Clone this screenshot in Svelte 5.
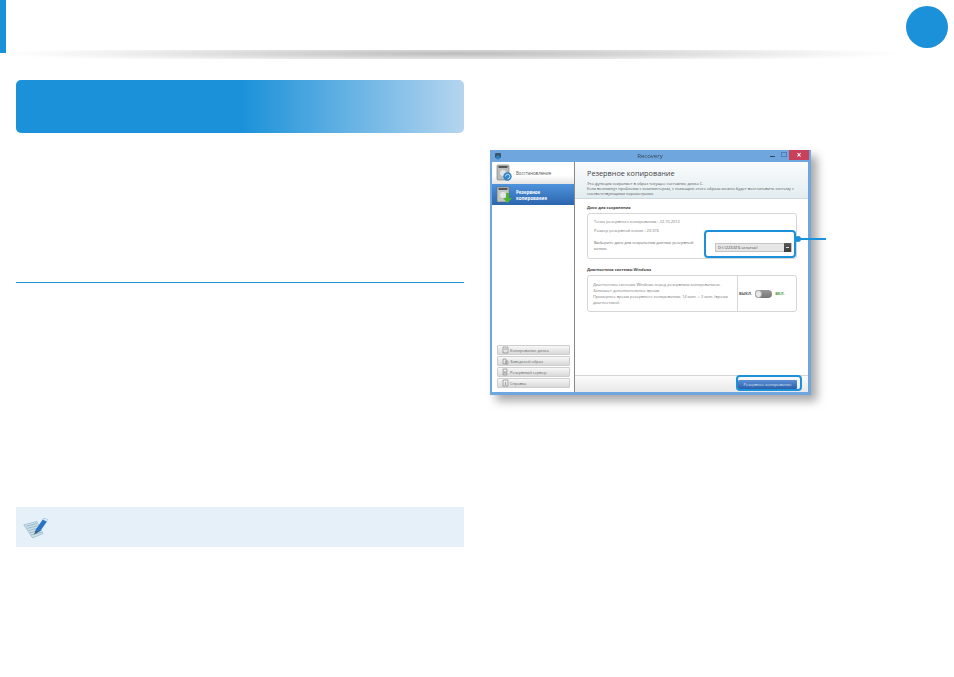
<script>
  const tools = [
    { label: "Копирование диска", glyph: "M1 1h5v6H1z M2 3h3" },
    { label: "Заводской образ", glyph: "M1 2h3v5H1z M4 4h2v3H4z" },
    { label: "Резервный сервер", glyph: "M1 1h4v3H1z M1 5h4v2H1z" },
    { label: "Справка", glyph: "M1 1h5v6H1z M3.500 3v3" }
  ];
</script>

<div class="page">
  <header class="top">
    <div class="chapter-dot"></div>
    <div class="shade"></div>
  </header>

  <div class="columns">
    <section class="left">
      <div class="heading"></div>
      <div class="rule"></div>
      <div class="note">
        <svg width="26" height="25" viewBox="0 0 30 28">
          <path d="M1 11 L16 7 L23 21 L11 26 Z" fill="#cde0e8" stroke="#8fb4c6" stroke-width="0.8" />
          <path d="M4 12.5 L16 9.5 M5 15 L17 12 M6.5 17.5 L18.5 14.5 M8 20 L20 17 M9.5 22.5 L21 19.5" stroke="#8aafc0" stroke-width="0.9" />
          <path d="M13 22 L15 16 L24 3 L29 5 L20 18 Z" fill="#2a74c4" />
          <path d="M24 3 L29 5 L28 7.5 L23 5 Z" fill="#dcecf7" />
          <path d="M13 22 L15 17 L17.5 19 Z" fill="#4a5a6a" />
        </svg>
      </div>
    </section>

    <section class="right">
      <div class="window">
        <div class="titlebar">
          <svg class="app-icon" width="8" height="8" viewBox="0 0 8 8">
            <rect x="1" y="1" width="6" height="5" rx="1" fill="#39566e" />
            <circle cx="4" cy="5.5" r="2" fill="#2c7fbf" />
          </svg>
          <span class="title">Recovery</span>
          <div class="controls">
            <span class="min"></span>
            <span class="max"></span>
            <span class="close">×</span>
          </div>
        </div>

        <div class="body">
          <aside class="side">
            <div class="item">
              <svg width="17" height="18" viewBox="0 0 17 18">
                <rect x="1" y="1" width="12" height="15" rx="1" fill="#b9bdbd" stroke="#6d7272" stroke-width="0.6" />
                <rect x="2.500" y="2" width="9" height="2" fill="#555" />
                <circle cx="7" cy="9" r="3" fill="#e2e4e4" />
                <circle cx="11.500" cy="12.500" r="4.200" fill="#2f83c9" />
                <path d="M9.500 12.500a2.200 2.200 0 1 1 2 2.200" fill="none" stroke="#cfe6f7" stroke-width="0.9" />
              </svg>
              <span>Восстановление</span>
            </div>
            <div class="item active">
              <svg width="17" height="18" viewBox="0 0 17 18">
                <rect x="1" y="1" width="12" height="15" rx="1" fill="#c3c7c4" stroke="#5d6a70" stroke-width="0.6" />
                <rect x="2.500" y="2" width="9" height="2" fill="#555" />
                <circle cx="7" cy="9" r="3" fill="#e6e8e6" />
                <path d="M10 7h3v5h3l-4.500 5L7 12h3z" fill="#4fb32f" />
              </svg>
              <span>Резервное<br />копирование</span>
            </div>
            <div class="tools">
              {#each tools as tool}
                <button class="tool">
                  <svg width="7" height="8" viewBox="0 0 7 8">
                    <path d={tool.glyph} fill="none" stroke="#8a8a8a" stroke-width="0.7" />
                  </svg>
                  {tool.label}
                </button>
              {/each}
            </div>
          </aside>

          <main class="content">
            <div class="intro">
              <h1>Резервное копирование</h1>
              <p>Эта функция сохраняет в образ текущее состояние диска С.</p>
              <p>Если возникнут проблемы с компьютером, с помощью этого образа можно будет восстановить систему с</p>
              <p>соответствующими параметрами.</p>
            </div>

            <div class="panels">
              <h2>Диск для сохранения</h2>
              <div class="box disk">
                <p>Точка резервного копирования : 22.10.2012</p>
                <p class="second">Размер резервной копии : 23.5ГБ</p>
                <div class="pick">
                  <p>Выберите диск для сохранения данных резервной копии.</p>
                  <div class="select">
                    <span>D:\ (223.6ГБ остаток)</span>
                    <i></i>
                  </div>
                </div>
              </div>

              <h2 class="diag">Диагностика системы Windows</h2>
              <div class="box check">
                <div class="check-text">
                  <p>Диагностика системы Windows перед резервным копированием.</p>
                  <p>Занимает дополнительное время.</p>
                  <p>Примерное время резервного копирования: 14 мин. + 2 мин. (время диагностики).</p>
                </div>
                <div class="switch">
                  <b>ВЫКЛ.</b>
                  <span class="track"><span class="knob"></span></span>
                  <b class="on">ВКЛ.</b>
                </div>
              </div>
            </div>

            <div class="footer">
              <button class="backup">Резервное копирование</button>
            </div>
          </main>
        </div>

        <div class="mark mark-select"></div>
        <div class="mark mark-button"></div>
      </div>
      <div class="callout"></div>
    </section>
  </div>
</div>

<style>
  :global(body) {
    margin: 0;
    background: #fff;
  }

  .page {
    width: 954px;
    height: 677px;
    background: #fff;
    overflow: hidden;
    font-family: "Open Sans", "Liberation Sans", sans-serif;
  }

  .top {
    position: relative;
    height: 53px;
    box-sizing: border-box;
    border-left: 6px solid #1a91d9;
    display: flex;
    justify-content: flex-end;
    align-items: center;
  }

  .chapter-dot {
    position: relative;
    z-index: 1;
    width: 42px;
    height: 42px;
    margin: 1px 6px 0 0;
    border-radius: 50%;
    background: #1a91d9;
  }

  .shade {
    position: absolute;
    left: -6px;
    top: 50px;
    width: 905px;
    height: 9px;
    background: radial-gradient(ellipse 50% 100% at 50% 40%, #bcbcbc 0%, #d6d6d6 40%, #f0f0f0 75%, rgba(255, 255, 255, 0) 100%);
  }

  .columns {
    display: flex;
    padding: 27px 0 0 16px;
  }

  .left {
    width: 448px;
  }

  .heading {
    height: 53px;
    border-radius: 5px;
    background: linear-gradient(90deg, #1a91d9 0%, #1a91d9 50%, #b5d5ef 100%);
  }

  .rule {
    height: 1px;
    margin-top: 149px;
    background: #1a91d9;
  }

  .note {
    height: 40px;
    margin-top: 224px;
    padding-left: 7px;
    display: flex;
    align-items: center;
    background: #e5f0f9;
  }

  .right {
    position: relative;
    margin: 70px 0 0 26px;
  }

  .window {
    position: relative;
    width: 321px;
    height: 245px;
    box-sizing: border-box;
    display: flex;
    flex-direction: column;
    padding: 0 3px 3px 2px;
    background: #6fa6dd;
    box-shadow: 6px 6px 9px rgba(0, 0, 0, 0.35);
    filter: blur(0.35px);
  }

  .titlebar {
    position: relative;
    height: 12px;
    flex: none;
    display: flex;
    align-items: center;
    justify-content: center;
  }

  .app-icon {
    position: absolute;
    left: 2px;
    top: 2px;
  }

  .title {
    font-size: 6px;
    color: #36485c;
  }

  .controls {
    position: absolute;
    right: -1px;
    top: 0;
    display: flex;
    align-items: flex-start;
  }

  .min {
    width: 5px;
    height: 1px;
    margin: 6px 6px 0 0;
    background: #33465a;
  }

  .max {
    width: 4px;
    height: 3px;
    margin: 2px 2px 0 0;
    border: 1px solid #4f7fb4;
  }

  .close {
    width: 20px;
    height: 10px;
    background: #c9405a;
    color: #fff;
    font-size: 8px;
    line-height: 9px;
    text-align: center;
    font-weight: 700;
  }

  .body {
    flex: 1;
    display: flex;
    min-height: 0;
  }

  .side {
    width: 83px;
    flex: none;
    box-sizing: border-box;
    display: flex;
    flex-direction: column;
    background: #fff;
    border-right: 1px solid #888;
  }

  .item {
    height: 22px;
    flex: none;
    padding-left: 4px;
    display: flex;
    align-items: center;
    gap: 3px;
    font-size: 4.4px;
    line-height: 6px;
    color: #555;
    background: linear-gradient(#fff 60%, #e4e4e4);
  }

  .item.active {
    height: 21px;
    color: #fff;
    font-weight: 700;
    background: linear-gradient(#4e93dc, #2c66ae);
  }

  .tools {
    margin-top: auto;
    padding: 0 4px 4px 5px;
    display: flex;
    flex-direction: column;
    gap: 1px;
  }

  .tool {
    height: 10px;
    padding: 0 0 0 4px;
    display: flex;
    align-items: center;
    gap: 1px;
    box-sizing: border-box;
    width: 73px;
    border: 1px solid #cecece;
    border-radius: 1px;
    background: linear-gradient(#f8f8f8, #d8d8d8);
    font-family: inherit;
    font-size: 4px;
    color: #666;
  }

  .content {
    flex: 1;
    min-width: 0;
    display: flex;
    flex-direction: column;
    background: #fff;
  }

  .intro {
    height: 37px;
    flex: none;
    box-sizing: border-box;
    padding: 5px 0 0 12px;
    background: linear-gradient(#fbfcfc, #e2edf1);
    border-bottom: 1px solid #cfdadf;
  }

  h1 {
    margin: 0 0 2px;
    font-size: 7.3px;
    line-height: 12px;
    font-weight: 400;
    color: #444;
  }

  p {
    margin: 0;
    font-size: 4px;
    line-height: 5px;
    color: #777;
  }

  .intro p {
    color: #555;
  }

  .panels {
    flex: 1;
    padding: 5px 0 0 12px;
  }

  h2 {
    margin: 0;
    font-size: 3.9px;
    line-height: 7px;
    font-weight: 700;
    color: #444;
  }

  h2.diag {
    margin-top: 7px;
  }

  .box {
    width: 210px;
    box-sizing: border-box;
    margin-top: 2px;
    border: 1px solid #d6d6d6;
    border-radius: 3px;
    background: #fff;
  }

  .disk {
    height: 46px;
    padding: 5px 4px 0 6px;
  }

  .second {
    margin-top: 4px;
  }

  .pick {
    margin-top: 7px;
    display: flex;
    align-items: flex-start;
    justify-content: space-between;
  }

  .pick p {
    width: 100px;
    line-height: 6px;
    color: #666;
  }

  .select {
    width: 77px;
    height: 9px;
    margin-top: 3px;
    box-sizing: border-box;
    display: flex;
    align-items: center;
    justify-content: space-between;
    padding-left: 2px;
    background: #e6e6e6;
    border: 1px solid #c4c4c4;
    font-size: 4px;
    color: #444;
  }

  .select i {
    width: 7px;
    height: 9px;
    background: linear-gradient(#5a5a5a, #3c3c3c);
    display: flex;
    align-items: center;
    justify-content: center;
  }

  .select i::after {
    content: "";
    width: 3px;
    height: 1px;
    background: #ddd;
  }

  .check {
    height: 37px;
    display: flex;
  }

  .check-text {
    width: 150px;
    flex: none;
    box-sizing: border-box;
    padding: 6px 5px 0 5px;
    border-right: 1px solid #d6d6d6;
  }

  .check-text p {
    line-height: 6px;
  }

  .switch {
    flex: 1;
    display: flex;
    align-items: center;
    gap: 3px;
    padding-left: 1px;
    font-size: 4px;
    color: #555;
  }

  .track {
    width: 17px;
    height: 8px;
    display: block;
    border-radius: 4px;
    background: linear-gradient(#999, #777);
  }

  .knob {
    width: 7px;
    height: 8px;
    display: block;
    box-sizing: border-box;
    border: 1px solid #aaa;
    border-radius: 50%;
    background: #e8e8e8;
  }

  .on {
    color: #4c9b3c;
  }

  .footer {
    height: 17px;
    flex: none;
    box-sizing: border-box;
    padding: 4px 11px 0 0;
    display: flex;
    justify-content: flex-end;
    align-items: flex-start;
    border-top: 1px solid #d4d4d4;
    background: linear-gradient(#fbfbfb, #e9e9e9);
  }

  .backup {
    width: 59px;
    height: 9px;
    padding: 0;
    border: none;
    border-radius: 1px;
    background: linear-gradient(#5c8fd6, #2b5fa8);
    font-family: inherit;
    font-size: 4px;
    color: #dfe9f6;
  }

  .mark {
    position: absolute;
    box-sizing: border-box;
    border: 2px solid #1a91d9;
    border-radius: 4px;
  }

  .mark-select {
    left: 214px;
    top: 80px;
    width: 92px;
    height: 28px;
  }

  .mark-button {
    left: 246px;
    top: 225px;
    width: 66px;
    height: 16px;
  }

  .callout {
    position: absolute;
    left: 305px;
    top: 88px;
    width: 31px;
    height: 2px;
    background: #1a91d9;
  }

  .callout::before {
    content: "";
    position: absolute;
    left: 0;
    top: -2px;
    width: 6px;
    height: 6px;
    border-radius: 50%;
    background: #1a91d9;
  }
</style>
